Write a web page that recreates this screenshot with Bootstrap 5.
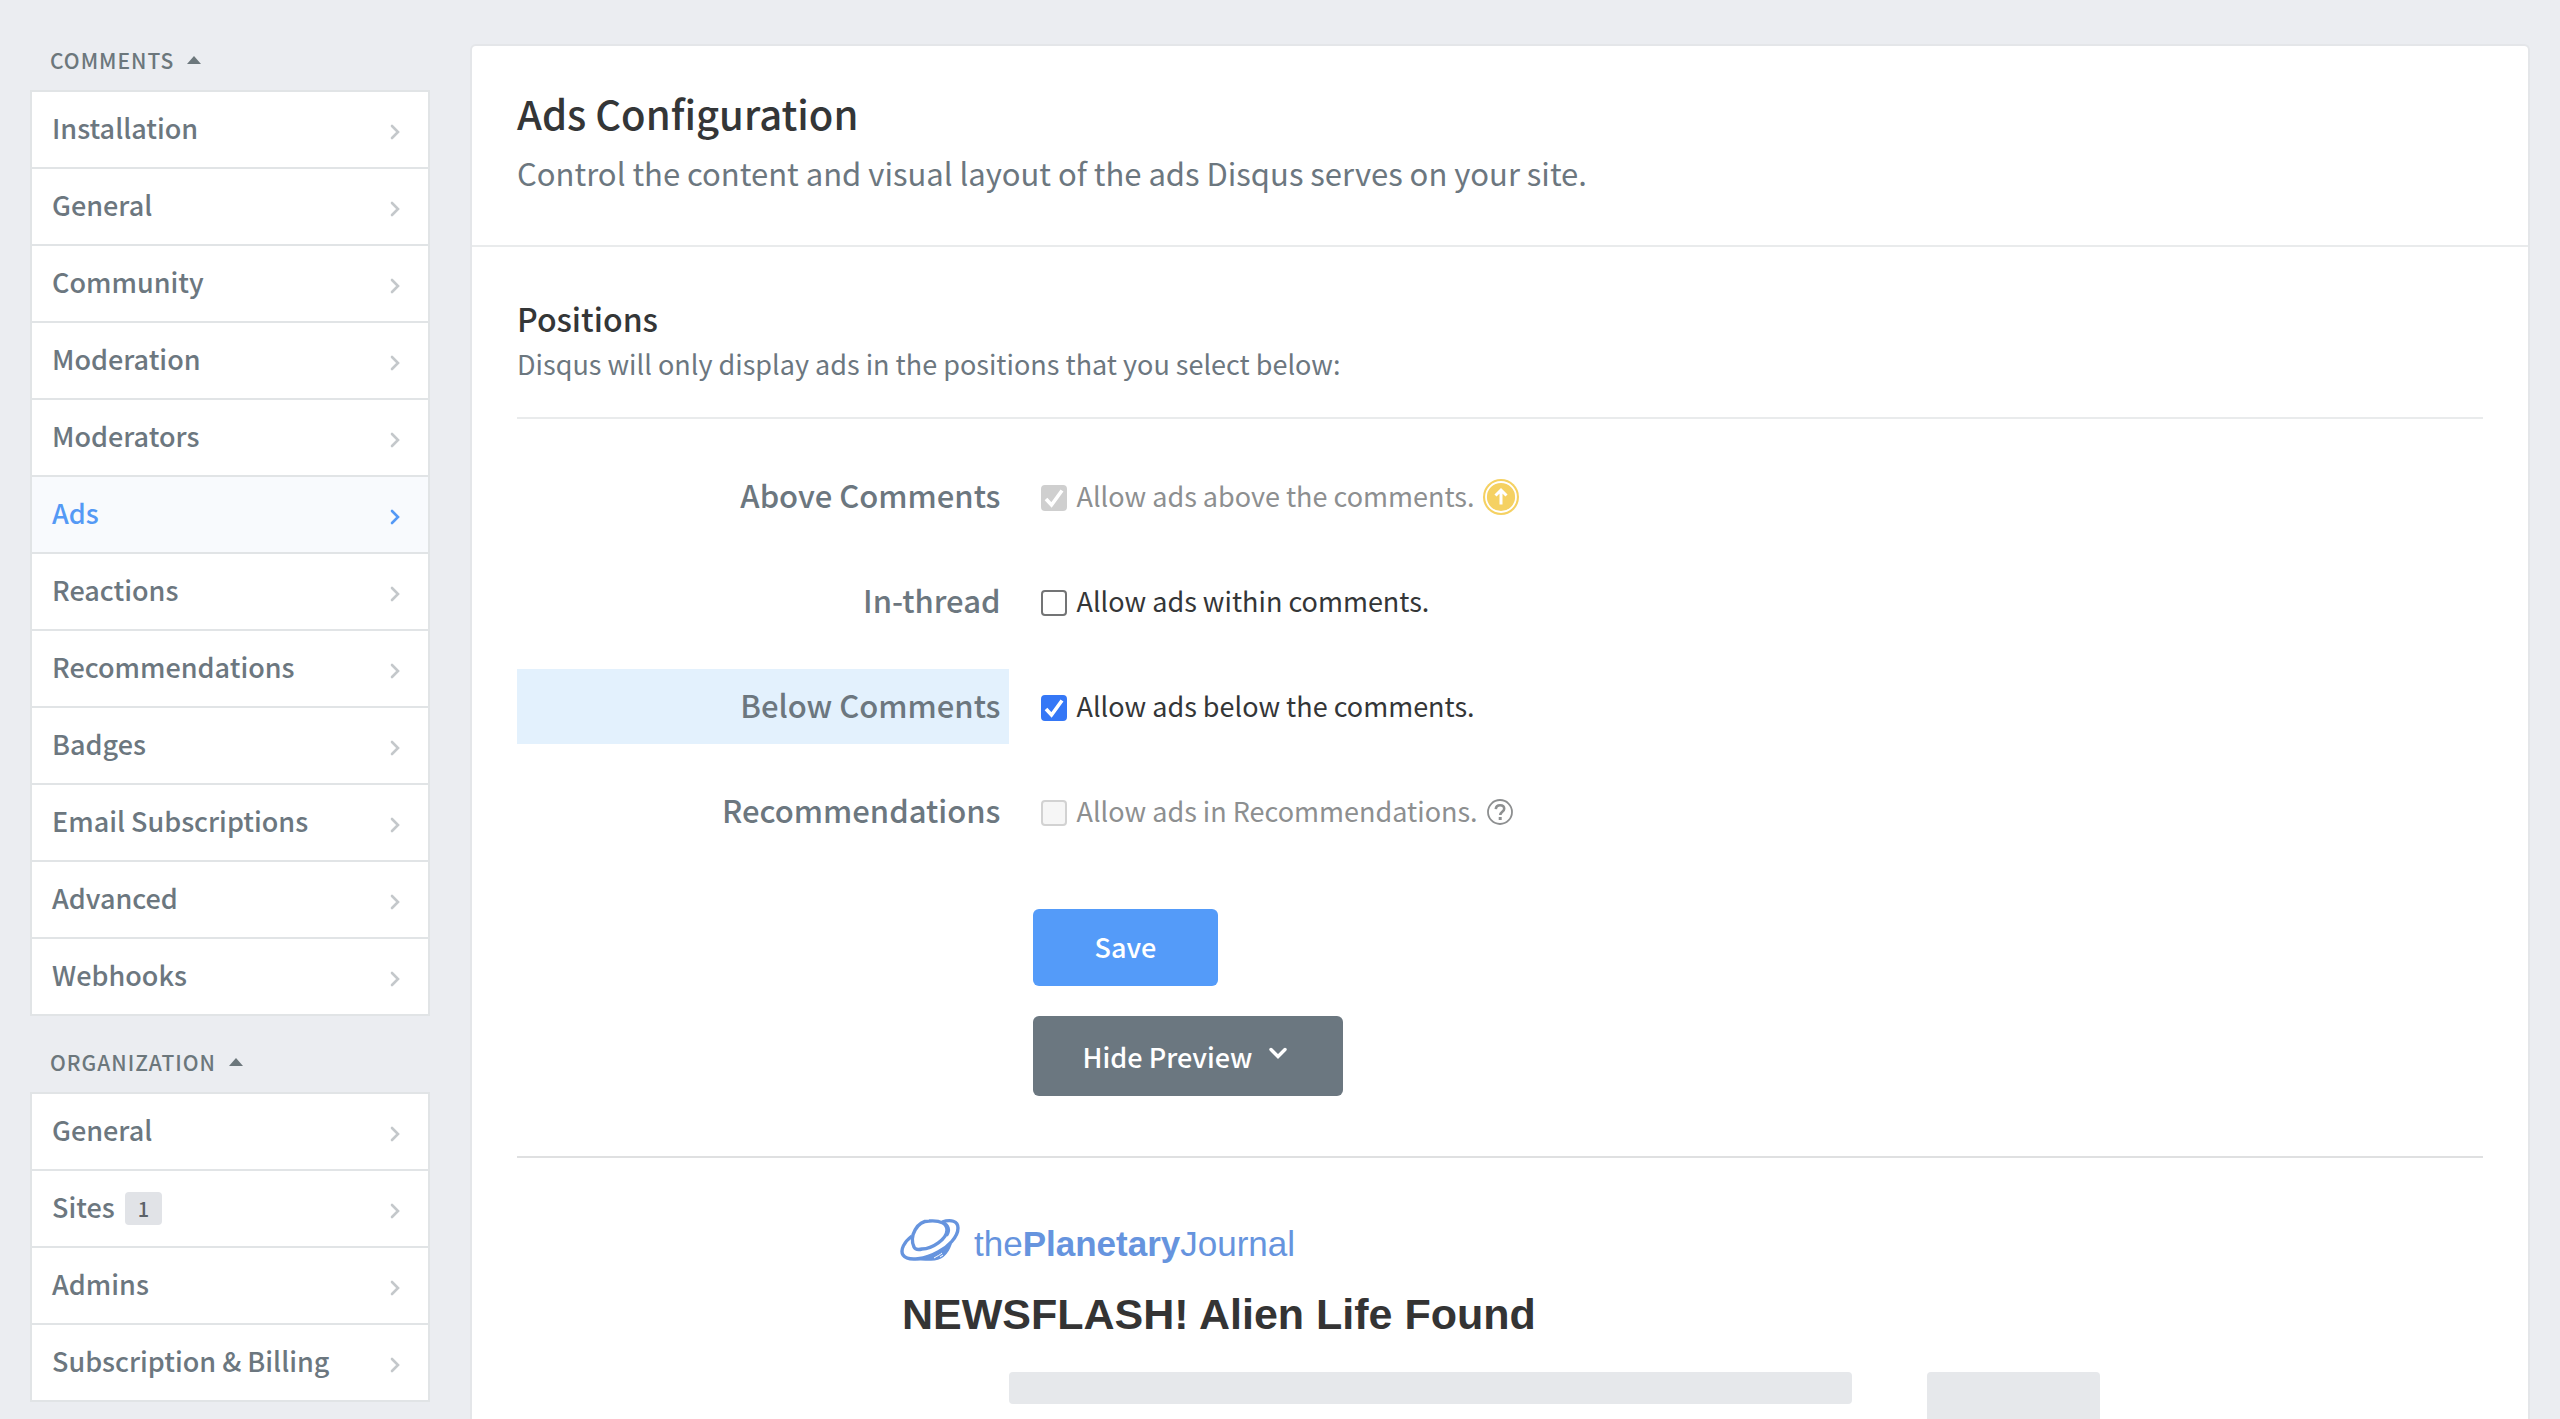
<!DOCTYPE html>
<html lang="en">
<head>
<meta charset="utf-8">
<meta name="viewport" content="width=device-width, initial-scale=1">
<title>Ads Configuration</title>
<link href="https://cdn.jsdelivr.net/npm/bootstrap@5.3.0/dist/css/bootstrap.min.css" rel="stylesheet">
<style>
  body { background: #ebedf1; color: #343637; font-family: "Noto Sans CJK SC", "Open Sans", sans-serif; font-size: 27px; line-height: 40px; }
  .page-shell { min-height: 100vh; padding: 0 30px; gap: 40px; }
  .side-menu { width: 400px; padding-top: 14px; }
  .menu-title { padding: 30px 20px 14px; font-size: 21px; line-height: 32px; font-weight: 500; color: #6c777c; letter-spacing: 1px; background: none; border: 0; gap: 13px; }
  .menu-title svg { width: 14px; height: 8px; }
  .menu-box { --bs-list-group-border-width: 2px; --bs-list-group-border-color: #e1e4e6; --bs-list-group-border-radius: 0; --bs-list-group-item-padding-x: 20px; --bs-list-group-item-padding-y: 0; --bs-list-group-color: #6c777f; --bs-list-group-action-color: #6c777f; --bs-list-group-active-bg: #f8fafd; --bs-list-group-active-color: #5499f5; --bs-list-group-active-border-color: #e1e4e6; font-weight: 500; }
  .menu-box .list-group-item { height: 77px; }
  .menu-box .list-group-item:first-child { height: 79px; }
  .menu-box .list-group-item.active { margin-top: 0; border-top-width: 0; }
  .menu-label { padding-bottom: 4px; }
  .menu-arrow { width: 10px; height: 16px; margin: 4px 8px 0 auto; color: #c4c8cb; }
  .active .menu-arrow { color: #5499f5; }
  .count-tag { font-size: 20px; line-height: 33px; padding: 0 13px; border-radius: 4px; background: #e1e3e7; color: #5c6268; margin-left: 10px; }
  .main-area { padding-top: 44px; min-width: 0; }
  .panel-card { border: 2px solid #e4e6e9; border-bottom: 0; border-radius: 6px 6px 0 0; }
  .panel-head { padding: 37px 45px 48px; border-bottom: 2px solid #e9ebec; }
  .panel-head h1 { font-size: 40px; line-height: 60px; font-weight: 500; margin: 0 0 6px; }
  .panel-head p { font-size: 31px; line-height: 48px; color: #6c777f; }
  .panel-main { padding: 49px 45px 0; }
  .panel-main h2 { font-size: 32px; line-height: 44px; font-weight: 500; margin: 0 0 4px; }
  .section-note { color: #6c777f; margin: 0 0 33px; }
  .rule { height: 2px; background: #e9ebec; }
  .rule-dark { background: #dfe0e1; margin-top: 60px; }
  .option-list { gap: 30px; padding: 40px 0 60px; }
  .option-row { height: 75px; }
  .option-name { font-size: 31px; font-weight: 500; color: #6c777f; padding: 0 8px 4px 0; }
  .option-name.picked { background: #e3f1fd; }
  .option-field { padding-left: 32px; }
  .option-field label { padding-bottom: 2px; margin-left: 10px; }
  .option-field .form-check-input { width: 26px; height: 26px; margin: 3px 0 0; border: 2px solid #737475; border-radius: 4px; background-size: 26px 26px; background-position: center; --bs-form-check-bg: #fff; }
  .option-field .form-check-input:checked { background-color: #3577f6; border-color: #3577f6; background-image: url("data:image/svg+xml,%3csvg xmlns='http://www.w3.org/2000/svg' viewBox='0 0 26 26'%3e%3cpath fill='none' stroke='%23fff' stroke-width='3.6' d='M5 14l5.5 6L21 5.5'/%3e%3c/svg%3e"); }
  .option-field .form-check-input:disabled { opacity: 1; background-color: #f6f6f6; border-color: #d2d2d2; }
  .option-field .form-check-input:checked:disabled { background-color: #cfcfcf; border-color: #cfcfcf; }
  .option-field .form-check-input:disabled ~ label { opacity: 1; color: #8d8f90; }
  .info-icon { margin-left: 9px; }
  .form-actions { gap: 30px; padding-left: 24px; }
  .form-actions .btn { border: 0; border-radius: 6px; font-size: 27px; line-height: 40px; font-weight: 500; color: #fff; }
  .btn-save { height: 77px; padding: 0 62px 2px; background: #549bf9; }
  .btn-preview { height: 80px; padding: 2px 56px 0 50px; background: #6b7780; gap: 17px; }
  .btn-preview svg { width: 18px; height: 12px; margin-bottom: 8px; }
  .preview-page { width: 100%; max-width: 1200px; padding-top: 58px; font-family: "Liberation Sans", sans-serif; }
  .site-brand { gap: 14px; color: #6694de; font-size: 35px; line-height: 40px; }
  .brand-name { padding-top: 8px; }
  .preview-title { font-size: 43px; line-height: 48px; font-weight: 700; color: #343434; padding: 26px 0 34px 2px; margin: 0; }
  .preview-cols { padding-left: 109px; gap: 75px; }
  .ghost-block { background: #e6e8eb; border-radius: 4px; }
  .ghost-line { height: 32px; }
  .ghost-side { width: 173px; border-radius: 4px 4px 0 0; }
</style>
</head>
<body>
<svg class="d-none" xmlns="http://www.w3.org/2000/svg">
  <symbol id="arrow-right" viewBox="0 0 10 16"><path d="M2 2l6 6-6 6" fill="none" stroke="currentColor" stroke-width="2.6" stroke-linecap="round"/></symbol>
  <symbol id="caret-up" viewBox="0 0 14 8"><path d="M0 8l7-8 7 8z" fill="currentColor"/></symbol>
</svg>
<div class="page-shell d-flex">
  <aside class="side-menu flex-shrink-0">
    <button class="menu-title d-flex align-items-center w-100 text-uppercase" type="button">Comments <svg><use href="#caret-up"/></svg></button>
    <nav class="menu-box list-group" aria-label="Comments">
      <a href="#" class="list-group-item list-group-item-action d-flex align-items-center"><span class="menu-label">Installation</span><svg class="menu-arrow"><use href="#arrow-right"/></svg></a>
      <a href="#" class="list-group-item list-group-item-action d-flex align-items-center"><span class="menu-label">General</span><svg class="menu-arrow"><use href="#arrow-right"/></svg></a>
      <a href="#" class="list-group-item list-group-item-action d-flex align-items-center"><span class="menu-label">Community</span><svg class="menu-arrow"><use href="#arrow-right"/></svg></a>
      <a href="#" class="list-group-item list-group-item-action d-flex align-items-center"><span class="menu-label">Moderation</span><svg class="menu-arrow"><use href="#arrow-right"/></svg></a>
      <a href="#" class="list-group-item list-group-item-action d-flex align-items-center"><span class="menu-label">Moderators</span><svg class="menu-arrow"><use href="#arrow-right"/></svg></a>
      <a href="#" class="list-group-item list-group-item-action d-flex align-items-center active" aria-current="page"><span class="menu-label">Ads</span><svg class="menu-arrow"><use href="#arrow-right"/></svg></a>
      <a href="#" class="list-group-item list-group-item-action d-flex align-items-center"><span class="menu-label">Reactions</span><svg class="menu-arrow"><use href="#arrow-right"/></svg></a>
      <a href="#" class="list-group-item list-group-item-action d-flex align-items-center"><span class="menu-label">Recommendations</span><svg class="menu-arrow"><use href="#arrow-right"/></svg></a>
      <a href="#" class="list-group-item list-group-item-action d-flex align-items-center"><span class="menu-label">Badges</span><svg class="menu-arrow"><use href="#arrow-right"/></svg></a>
      <a href="#" class="list-group-item list-group-item-action d-flex align-items-center"><span class="menu-label">Email Subscriptions</span><svg class="menu-arrow"><use href="#arrow-right"/></svg></a>
      <a href="#" class="list-group-item list-group-item-action d-flex align-items-center"><span class="menu-label">Advanced</span><svg class="menu-arrow"><use href="#arrow-right"/></svg></a>
      <a href="#" class="list-group-item list-group-item-action d-flex align-items-center"><span class="menu-label">Webhooks</span><svg class="menu-arrow"><use href="#arrow-right"/></svg></a>
    </nav>
    <button class="menu-title d-flex align-items-center w-100 text-uppercase" type="button">Organization <svg><use href="#caret-up"/></svg></button>
    <nav class="menu-box list-group" aria-label="Organization">
      <a href="#" class="list-group-item list-group-item-action d-flex align-items-center"><span class="menu-label">General</span><svg class="menu-arrow"><use href="#arrow-right"/></svg></a>
      <a href="#" class="list-group-item list-group-item-action d-flex align-items-center"><span class="menu-label">Sites</span><span class="count-tag">1</span><svg class="menu-arrow"><use href="#arrow-right"/></svg></a>
      <a href="#" class="list-group-item list-group-item-action d-flex align-items-center"><span class="menu-label">Admins</span><svg class="menu-arrow"><use href="#arrow-right"/></svg></a>
      <a href="#" class="list-group-item list-group-item-action d-flex align-items-center"><span class="menu-label">Subscription &amp; Billing</span><svg class="menu-arrow"><use href="#arrow-right"/></svg></a>
    </nav>
  </aside>

  <main class="main-area flex-grow-1 d-flex flex-column">
    <div class="panel-card bg-white flex-grow-1 d-flex flex-column">
      <header class="panel-head">
        <h1>Ads Configuration</h1>
        <p class="mb-0">Control the content and visual layout of the ads Disqus serves on your site.</p>
      </header>
      <div class="panel-main flex-grow-1 d-flex flex-column">
        <h2>Positions</h2>
        <p class="section-note">Disqus will only display ads in the positions that you select below:</p>
        <div class="rule flex-shrink-0"></div>
        <form>
          <div class="option-list d-flex flex-column">
            <div class="option-row row g-0">
              <div class="option-name col-3 d-flex align-items-center justify-content-end">Above Comments</div>
              <div class="option-field col-9 d-flex align-items-center">
                <input class="form-check-input" type="checkbox" id="above" checked disabled><label for="above">Allow ads above the comments.</label>
                <svg class="info-icon" width="36" height="36" viewBox="0 0 36 36"><circle cx="18" cy="18" r="18" fill="#f5d162"/><circle cx="18" cy="18" r="15" fill="none" stroke="#fff" stroke-width="1.8"/><path d="M18 25.500V12M12.500 16.500L18 11l5.500 5.500" fill="none" stroke="#fff" stroke-width="3"/></svg>
              </div>
            </div>
            <div class="option-row row g-0">
              <div class="option-name col-3 d-flex align-items-center justify-content-end">In-thread</div>
              <div class="option-field col-9 d-flex align-items-center">
                <input class="form-check-input" type="checkbox" id="inthread"><label for="inthread">Allow ads within comments.</label>
              </div>
            </div>
            <div class="option-row row g-0">
              <div class="option-name picked col-3 d-flex align-items-center justify-content-end">Below Comments</div>
              <div class="option-field col-9 d-flex align-items-center">
                <input class="form-check-input" type="checkbox" id="below" checked><label for="below">Allow ads below the comments.</label>
              </div>
            </div>
            <div class="option-row row g-0">
              <div class="option-name col-3 d-flex align-items-center justify-content-end">Recommendations</div>
              <div class="option-field col-9 d-flex align-items-center">
                <input class="form-check-input" type="checkbox" id="recs" disabled><label for="recs">Allow ads in Recommendations.</label>
                <svg class="info-icon" width="26" height="26" viewBox="0 0 26 26" fill="none" stroke="#8d8f90"><circle cx="13" cy="13" r="12" stroke-width="1.8"/><path d="M8.800 10.200c.2-2.600 2-3.900 4.300-3.900 2.400 0 4.100 1.400 4.100 3.500 0 3-3.900 3-3.900 6.200" stroke-width="2.6"/><path d="M13.200 18v3" stroke-width="3"/></svg>
              </div>
            </div>
          </div>
          <div class="row g-0">
            <div class="form-actions col-9 offset-3 d-flex flex-column align-items-start">
              <button class="btn btn-save" type="submit">Save</button>
              <button class="btn btn-preview d-flex align-items-center" type="button">Hide Preview <svg viewBox="0 0 18 12"><path d="M2 2.500l7 7 7-7" fill="none" stroke="#fff" stroke-width="3.400" stroke-linecap="round"/></svg></button>
            </div>
          </div>
        </form>
        <div class="rule rule-dark flex-shrink-0"></div>
        <section class="preview-page mx-auto flex-grow-1 d-flex flex-column">
          <div class="site-brand d-flex align-items-center">
            <svg width="60" height="44" viewBox="0 0 60 44" fill="none" stroke="currentColor" stroke-width="3.400" stroke-linejoin="round"><path d="M14 29C9 18 17 3 29 3c12-1 18 3 18 9 0 9-15 19-25 19-4 1-7 0-8-2z"/><path d="M42 4c9-3 16-1 16 6 0 9-10 19-20 24-12 7-30 10-35 3-3-5 1-13 9-19"/><path d="M51 26c-3 9-8 16-20 16-6 0-12 0-16-1 10 0 27-5 36-15z" fill="currentColor" stroke-width="1.500"/><path d="M43 4c6 3 8 8 4 14" stroke-width="2"/><path d="M34 40c3-2 6-3 8-5M40 39l3-2" stroke="#fff" stroke-width="1"/></svg>
            <div class="brand-name">the<b>Planetary</b>Journal</div>
          </div>
          <h3 class="preview-title">NEWSFLASH! Alien Life Found</h3>
          <div class="preview-cols d-flex flex-grow-1">
            <div class="flex-grow-1"><div class="ghost-block ghost-line"></div></div>
            <div class="ghost-block ghost-side"></div>
          </div>
        </section>
      </div>
    </div>
  </main>
</div>
<script src="https://cdn.jsdelivr.net/npm/bootstrap@5.3.0/dist/js/bootstrap.bundle.min.js"></script>
</body>
</html>
